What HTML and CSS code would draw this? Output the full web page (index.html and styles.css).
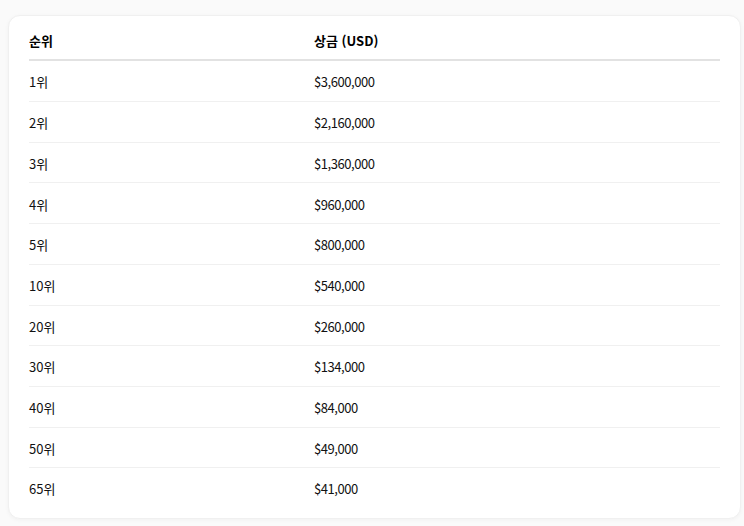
FILE: index.html
```html
<!DOCTYPE html>
<html lang="ko">
<head>
<meta charset="utf-8">
<link rel="stylesheet" href="styles.css">
</head>
<body>
<div class="page">
  <div class="card">
    <table class="prize-table">
      <thead>
        <tr><th class="col-rank">순위</th><th>상금 (USD)</th></tr>
      </thead>
      <tbody>
        <tr><td>1위</td><td class="amount">$3,600,000</td></tr>
        <tr><td>2위</td><td class="amount">$2,160,000</td></tr>
        <tr><td>3위</td><td class="amount">$1,360,000</td></tr>
        <tr><td>4위</td><td class="amount">$960,000</td></tr>
        <tr><td>5위</td><td class="amount">$800,000</td></tr>
        <tr><td>10위</td><td class="amount">$540,000</td></tr>
        <tr><td>20위</td><td class="amount">$260,000</td></tr>
        <tr><td>30위</td><td class="amount">$134,000</td></tr>
        <tr><td>40위</td><td class="amount">$84,000</td></tr>
        <tr><td>50위</td><td class="amount">$49,000</td></tr>
        <tr><td>65위</td><td class="amount">$41,000</td></tr>
      </tbody>
    </table>
  </div>
</div>
</body>
</html>
```
FILE: styles.css
```css
html, body {
  margin: 0;
  background: #fafafa;
}
.page {
  padding: 15px 3px 7px 8px;
}
.card {
  background: #ffffff;
  border: 1px solid #f0f0f0;
  border-radius: 12px;
  box-shadow: 0 1px 4px rgba(0, 0, 0, 0.04);
  padding: 6.5px 20px 10px 20px;
  font-family: "Noto Sans CJK KR", "Noto Sans", sans-serif;
  font-size: 13px;
  color: #111;
}
.prize-table {
  width: 100%;
  border-collapse: collapse;
  table-layout: fixed;
}
.col-rank {
  width: 285px;
}
.prize-table th {
  text-align: left;
  font-weight: 700;
  line-height: 16px;
  padding: 10.45px 0;
  border-bottom: 2px solid #e2e2e2;
  color: #000;
}
.prize-table td {
  line-height: 16px;
  padding: 13.1px 0 10.6px;
  border-bottom: 1px solid #f0f0f0;
}
.prize-table .amount {
  letter-spacing: -0.45px;
}
.prize-table tbody tr:last-child td {
  border-bottom: none;
}
```
